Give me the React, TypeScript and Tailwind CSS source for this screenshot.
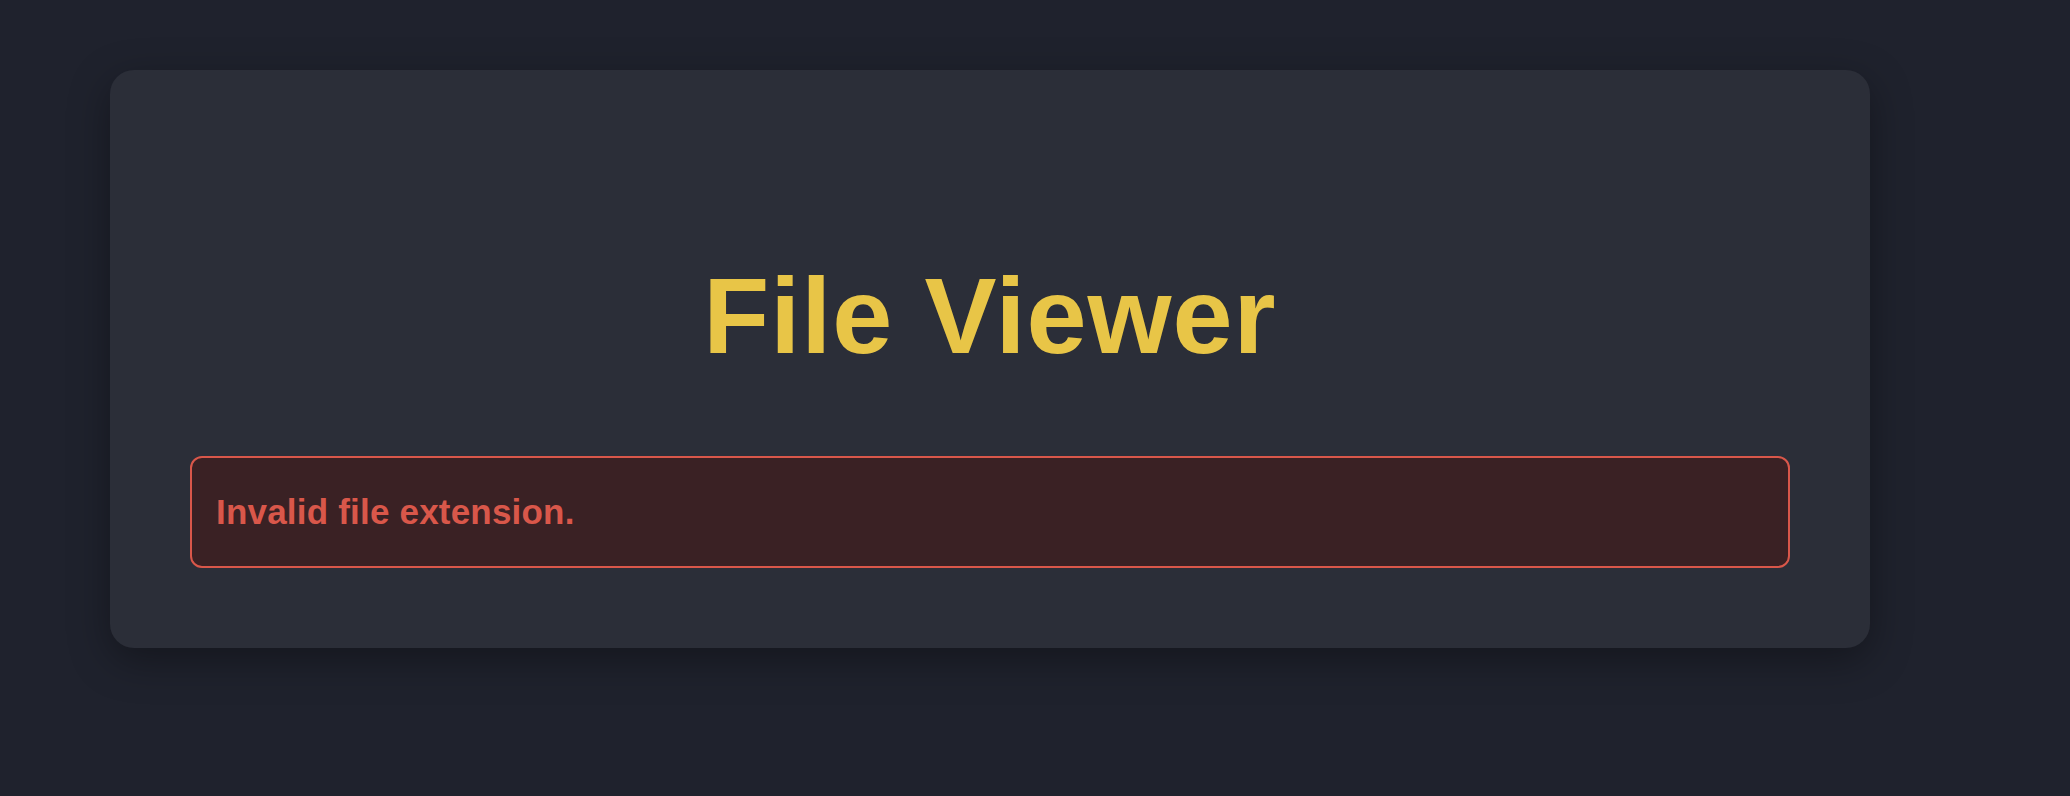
import React from 'react';

export default function App() {
  return (
    <div className="min-h-screen w-full bg-[#1f222d] pt-[70px] pl-[110px] font-['Liberation_Sans',Arial,sans-serif]">
      <div className="w-[1760px] rounded-[24px] bg-[#2b2e38] px-[80px] pb-[80px] pt-[183px] shadow-[0_12px_40px_rgba(0,0,0,0.35)]">
        <h1 className="mb-[77px] text-center text-[108px] font-bold leading-[126px] tracking-[1px] text-[#e8c547]">
          File Viewer
        </h1>
        <div className="flex h-[112px] items-center rounded-[12px] border-2 border-[#d9574a] bg-[#3a2124] px-[24px]">
          <p className="text-[35px] font-bold leading-[42px] tracking-[0.2px] text-[#d9574a]">Invalid file extension.</p>
        </div>
      </div>
    </div>
  );
}
